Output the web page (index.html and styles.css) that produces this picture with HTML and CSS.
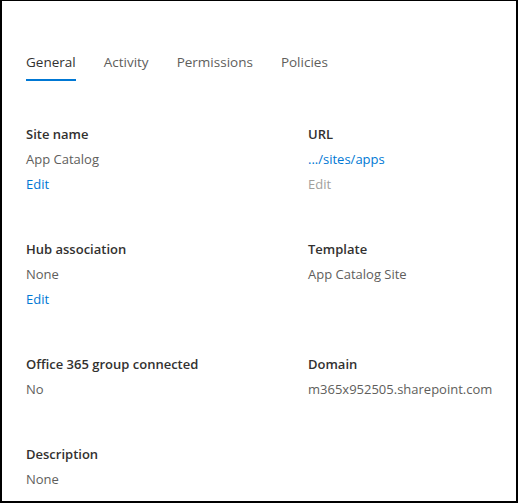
FILE: index.html
```html
<!DOCTYPE html>
<html>
<head>
<meta charset="utf-8">
<link rel="stylesheet" href="styles.css">
</head>
<body>
<div class="panel">
  <nav class="tabs">
    <span class="tab active">General</span>
    <span class="tab">Activity</span>
    <span class="tab">Permissions</span>
    <span class="tab">Policies</span>
  </nav>
  <div class="grid">
    <div class="field">
      <div class="label">Site name</div>
      <div class="value">App Catalog</div>
      <div class="link">Edit</div>
    </div>
    <div class="field">
      <div class="label">URL</div>
      <div class="link">.../sites/apps</div>
      <div class="disabled">Edit</div>
    </div>
    <div class="field">
      <div class="label">Hub association</div>
      <div class="value">None</div>
      <div class="link">Edit</div>
    </div>
    <div class="field">
      <div class="label">Template</div>
      <div class="value">App Catalog Site</div>
    </div>
    <div class="field">
      <div class="label">Office 365 group connected</div>
      <div class="value">No</div>
    </div>
    <div class="field">
      <div class="label">Domain</div>
      <div class="value">m365x952505.sharepoint.com</div>
    </div>
    <div class="field">
      <div class="label">Description</div>
      <div class="value">None</div>
    </div>
  </div>
</div>
</body>
</html>
```
FILE: styles.css
```css
html, body {
  margin: 0;
  padding: 0;
  background: #fff;
}
.panel {
  box-sizing: border-box;
  width: 518px;
  height: 503px;
  border: 2px solid #000;
  border-top-width: 1px;
  padding: 51px 0 0 24px;
  font-family: "Segoe UI", "Open Sans", "Noto Sans", sans-serif;
  font-size: 13px;
  overflow: hidden;
}
.tabs {
  display: flex;
  gap: 28px;
}
.tab {
  font-size: 13.5px;
  line-height: 20px;
  padding-bottom: 7px;
  border-bottom: 2px solid transparent;
  color: #605e5c;
}
.tab.active {
  color: #323130;
  border-bottom-color: #0078d4;
}
.grid {
  margin-top: 40.5px;
  display: grid;
  grid-template-columns: 282px 1fr;
  row-gap: 40.25px;
  align-items: start;
}
.field > div {
  line-height: 25px;
  white-space: nowrap;
}
.label {
  color: #323130;
  font-weight: 600;
}
.value {
  color: #605e5c;
}
.link {
  color: #0078d4;
}
.disabled {
  color: #a19f9d;
}
```
